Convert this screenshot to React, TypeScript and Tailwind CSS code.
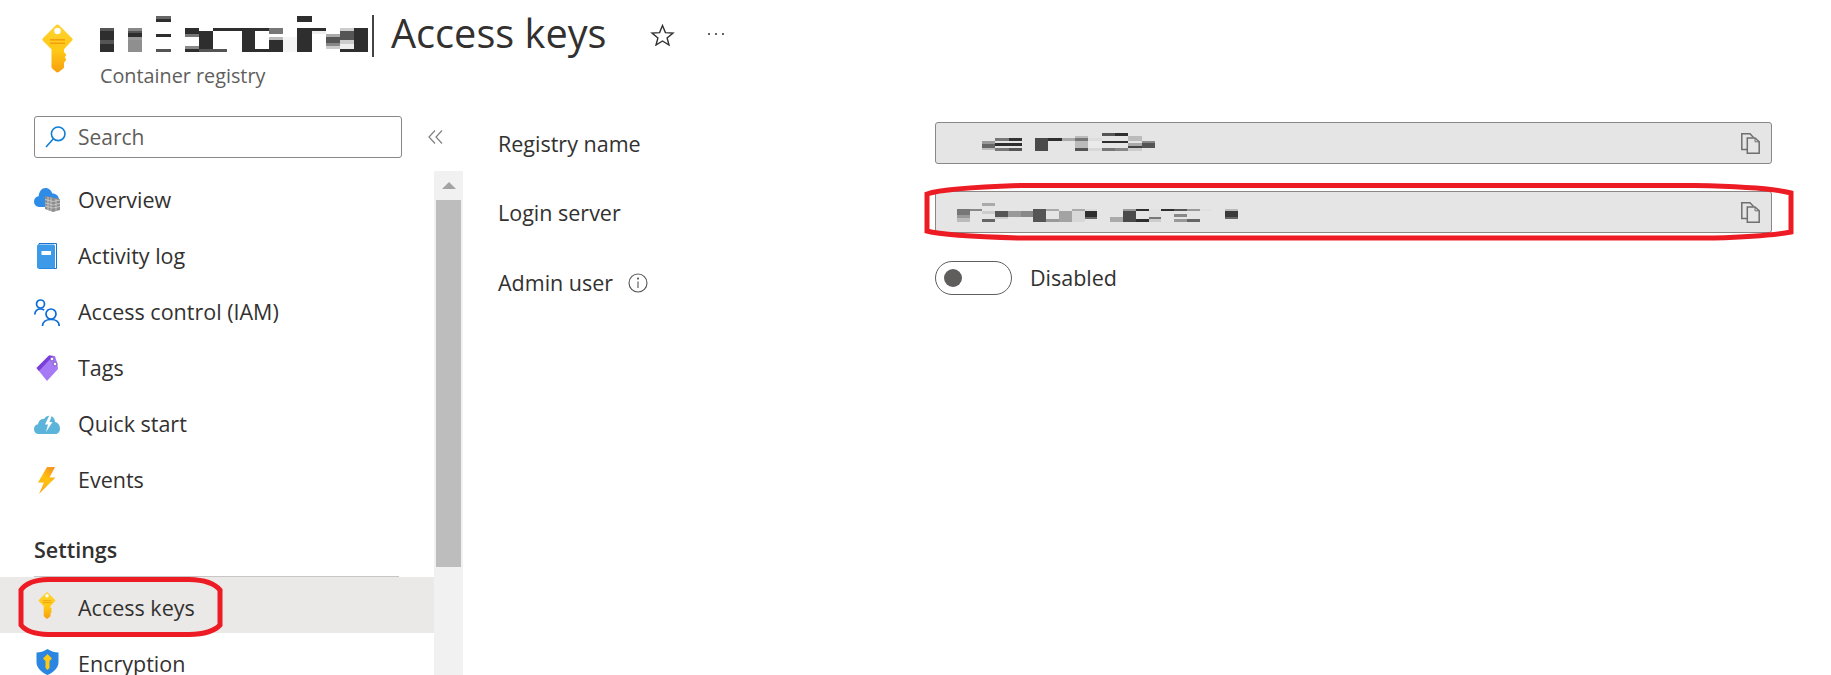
import { useId } from "react";

type Block = [number, number, number, number, string];

const titleBlocks: Block[] = [
  [216, 258, 54, 126, "#2e2e2e"], [216, 258, 54, 63, "#555"], [216, 258, 90, 100, "#555"],
  [300, 342, 54, 63, "#888"], [300, 342, 63, 70, "#555"], [300, 342, 70, 80, "#2e2e2e"], [300, 342, 80, 90, "#9a9a9a"], [300, 342, 90, 126, "#8f8f8f"],
  [384, 430, 18, 28, "#666"], [384, 430, 28, 36, "#2e2e2e"], [384, 430, 72, 81, "#2e2e2e"], [384, 430, 117, 126, "#555"],
  [470, 513, 54, 72, "#2e2e2e"], [470, 513, 72, 81, "#777"], [470, 513, 108, 117, "#888"], [470, 513, 117, 126, "#2e2e2e"],
  [513, 555, 63, 117, "#2e2e2e"], [513, 555, 117, 126, "#555"], [555, 597, 54, 63, "#2e2e2e"], [555, 597, 117, 126, "#555"],
  [597, 640, 54, 63, "#2e2e2e"], [640, 681, 54, 126, "#2e2e2e"], [681, 723, 54, 63, "#2e2e2e"], [681, 723, 117, 126, "#2e2e2e"],
  [723, 765, 54, 72, "#777"], [723, 765, 81, 90, "#bbb"], [723, 765, 90, 126, "#2e2e2e"], [765, 807, 81, 126, "#f5f5f5"],
  [807, 852, 18, 36, "#2e2e2e"], [807, 852, 54, 126, "#2e2e2e"], [852, 894, 54, 63, "#2e2e2e"], [852, 894, 63, 72, "#eee"],
  [894, 936, 72, 81, "#aaa"], [894, 936, 81, 99, "#555"], [894, 936, 99, 108, "#888"], [894, 936, 108, 117, "#ccc"],
  [936, 978, 54, 63, "#ccc"], [936, 978, 63, 90, "#555"], [936, 978, 90, 100, "#ccc"], [936, 978, 100, 117, "#eee"], [936, 978, 117, 126, "#2e2e2e"],
  [978, 1020, 54, 126, "#2e2e2e"], [1030, 1037, 15, 140, "#444"],
];

const nameBlocks: Block[] = [
  [66, 105, 45, 54, "#999"], [66, 105, 54, 66, "#666"], [66, 105, 66, 72, "#bbb"],
  [105, 147, 36, 45, "#777"], [105, 147, 51, 60, "#2e2e2e"], [105, 147, 66, 75, "#777"],
  [147, 186, 36, 45, "#333"], [147, 186, 51, 60, "#2e2e2e"], [147, 186, 66, 75, "#555"],
  [225, 264, 36, 75, "#4a4a4a"], [264, 306, 36, 45, "#2e2e2e"], [306, 345, 36, 45, "#aaa"],
  [345, 384, 30, 36, "#bbb"], [345, 384, 36, 45, "#777"], [345, 384, 45, 66, "#bbb"], [345, 384, 66, 75, "#555"],
  [384, 426, 36, 45, "#ddd"], [384, 426, 45, 66, "#eaeaea"], [384, 426, 66, 75, "#d8d8d8"],
  [426, 465, 21, 30, "#555"], [426, 465, 45, 51, "#2e2e2e"], [426, 465, 66, 75, "#777"],
  [465, 504, 21, 30, "#2e2e2e"], [465, 504, 45, 51, "#2e2e2e"], [465, 504, 66, 75, "#888"],
  [504, 546, 30, 45, "#bbb"], [504, 546, 51, 60, "#aaa"], [504, 546, 60, 66, "#444"], [504, 546, 66, 75, "#ccc"],
  [546, 585, 45, 51, "#888"], [546, 585, 51, 66, "#555"],
];

const serverBlocks: Block[] = [
  [-9, 30, 252, 270, "#777"], [-9, 30, 270, 280, "#999"], [-9, 30, 280, 291, "#bbb"], [30, 66, 252, 258, "#888"],
  [66, 105, 234, 243, "#aaa"], [66, 105, 258, 267, "#ccc"], [66, 105, 282, 291, "#666"],
  [105, 144, 258, 276, "#555"], [105, 144, 276, 282, "#ccc"], [144, 183, 258, 276, "#999"], [183, 219, 258, 276, "#888"],
  [219, 258, 252, 291, "#555"], [258, 297, 252, 258, "#aaa"], [258, 297, 282, 291, "#999"], [297, 336, 258, 291, "#a3a3a3"],
  [336, 375, 252, 258, "#aaa"], [336, 375, 258, 291, "#d8d8d8"], [375, 411, 252, 258, "#ddd"], [375, 411, 258, 276, "#2e2e2e"], [375, 411, 276, 282, "#666"],
  [450, 489, 276, 291, "#aaa"], [489, 528, 252, 258, "#999"], [489, 528, 258, 291, "#4a4a4a"],
  [528, 567, 252, 258, "#2e2e2e"], [528, 567, 282, 291, "#2e2e2e"], [567, 603, 252, 276, "#e0e0e0"], [567, 603, 276, 282, "#777"], [567, 603, 282, 291, "#ccc"],
  [603, 642, 252, 258, "#2e2e2e"], [642, 681, 252, 258, "#555"], [642, 681, 267, 276, "#888"], [642, 681, 282, 291, "#999"],
  [681, 720, 252, 258, "#999"], [681, 720, 282, 291, "#666"], [720, 756, 252, 258, "#e0e0e0"],
  [795, 834, 252, 258, "#bbb"], [795, 834, 258, 276, "#3a3a3a"], [795, 834, 276, 282, "#666"],
];

// redacted text in the screenshot, drawn from zoomed-in pixel blocks
function Mosaic({ blocks, box, width, height }: { blocks: Block[]; box: string; width: number; height: number }) {
  return (
    <svg width={width} height={height} viewBox={box} preserveAspectRatio="none" shapeRendering="crispEdges" className="shrink-0">
      {blocks.map(([x0, x1, y0, y1, fill], i) => (
        <rect key={i} x={x0} y={y0} width={x1 - x0} height={y1 - y0} fill={fill} />
      ))}
    </svg>
  );
}

function KeyIcon({ width, height }: { width: number; height: number }) {
  const id = useId();
  return (
    <svg width={width} height={height} viewBox="0 0 31 49">
      <defs>
        <linearGradient id={id} x1="0" y1="0" x2="0" y2="1">
          <stop offset="0" stopColor="#ffd22e" />
          <stop offset="0.55" stopColor="#ffc815" />
          <stop offset="1" stopColor="#f7a30f" />
        </linearGradient>
      </defs>
      <path
        d="M15.5 2.5 L28.5 15.5 L20 24.5 V29 L22 31 L20 33 L22 35.5 L20 38 V43 L15.5 46.5 L11.5 43 V24.5 L2.5 15.5 Z"
        fill={`url(#${id})`}
        stroke={`url(#${id})`}
        strokeWidth="4"
        strokeLinejoin="round"
      />
      <circle cx="15.5" cy="7" r="3.2" fill="#fff" />
      <rect x="8" y="15" width="15" height="1.6" fill="#f29f0d" />
      <rect x="8" y="18.5" width="15" height="1.6" fill="#f29f0d" />
    </svg>
  );
}

function CloudIcon() {
  return (
    <svg width="26" height="24" viewBox="0 0 26 24">
      <path d="M6 19 C2 19 0 16.5 0 13.5 C0 10.5 2 8.6 4.6 8.2 C5 3.5 8 0 11.5 0 C15 0 17.5 2.5 18.3 5.6 C22 5.6 25 8 25 12 C25 15 24 19 20 19 Z" fill="#2f8ce6" />
      <path d="M11 8 L26 11 V22 L19 24 L11 21 Z" fill="#8c8c8c" />
      <path d="M11 11.5 L19 13.5 L26 12 M11 15 L19 17 L26 15.5 M11 18 L19 20 L26 18.5 M14 9 V22 M17 9.5 V23.5 M22 11 V23" stroke="#d2d2d2" strokeWidth="0.8" fill="none" />
    </svg>
  );
}

function BookIcon() {
  return (
    <svg width="20" height="26" viewBox="0 0 20 26">
      <path d="M2 0.5 H19.5 V25.5 H2 Z" fill="none" stroke="#1b75d0" strokeWidth="1" />
      <rect x="0" y="1.5" width="18" height="24" rx="1.5" fill="#3c9ae8" />
      <rect x="4.5" y="8" width="9.5" height="4" fill="#fff" />
    </svg>
  );
}

function PeopleIcon() {
  return (
    <svg width="26" height="27" viewBox="0 0 26 27" fill="none" stroke="#0a6bdb" strokeWidth="1.7">
      <circle cx="6.5" cy="5" r="4" />
      <path d="M0.8 15.5 C1 12 3.5 10 6.5 10 C8 10 9.2 10.4 10.2 11.2" />
      <circle cx="17" cy="15" r="5" />
      <path d="M8.5 27 C8.5 23 12 20.5 17 20.5 C22 20.5 25.2 23 25.2 27" />
    </svg>
  );
}

function TagIcon() {
  return (
    <svg width="22" height="26" viewBox="0 0 22 26">
      <path d="M0.5 13 L13 0.5 L19 1 L21.5 9 L22 14 L11 26 Z" fill="#a67af4" />
      <path d="M0.5 13 L13 0.5 L17 1 L3 16 Z" fill="#7a3fd8" />
      <circle cx="16" cy="4" r="1.9" fill="#fff" stroke="#5b2bb0" strokeWidth="0.7" />
      <circle cx="19" cy="9" r="1.9" fill="#fff" stroke="#5b2bb0" strokeWidth="0.7" />
    </svg>
  );
}

function QuickStartIcon() {
  return (
    <svg width="26" height="19" viewBox="0 0 26 19">
      <path d="M5 19 C2 19 0 17 0 14 C0 11.5 1.6 9.6 4 9.2 C4.5 5.5 7 3.5 10 4 C11.5 1.5 14 0 17 1 C20 2 21 5 21 7 C24 7.5 26 10.5 26 13.5 C26 17 24 19 21 19 Z" fill="#5db4da" />
      <path d="M15.5 0 L11 9.5 H14 L12 17 L18.5 7 H15.5 L18 0 Z" fill="#fff" />
    </svg>
  );
}

function BoltIcon() {
  const id = useId();
  return (
    <svg width="18" height="27" viewBox="0 0 18 27">
      <defs>
        <linearGradient id={id} x1="0.8" y1="0" x2="0.3" y2="1">
          <stop offset="0" stopColor="#f7931e" />
          <stop offset="0.5" stopColor="#ffc20e" />
          <stop offset="1" stopColor="#f7a81e" />
        </linearGradient>
      </defs>
      <path d="M9 0 H17 L11.5 10.5 H17.5 L1 27 L6 15.5 H0 Z" fill={`url(#${id})`} />
    </svg>
  );
}

function ShieldIcon() {
  return (
    <svg width="23" height="26" viewBox="0 0 23 26" className="mt-[1px]">
      <path d="M11.5 0 C15 2.5 19 3.5 22.5 3.5 V13 C22.5 19 17.5 23.5 11.5 26 C5.5 23.5 0.5 19 0.5 13 V3.5 C4 3.5 8 2.5 11.5 0 Z" fill="#2a86e0" />
      <path d="M11.5 5 L16 9.5 L13.5 12 V19 L11.5 21 L9.5 19 V12 L7 9.5 Z" fill="#ffc815" />
    </svg>
  );
}

function CopyIcon() {
  return (
    <svg width="19" height="21" viewBox="0 0 19 21" fill="none" stroke="#6f6f6f" strokeWidth="1.5" className="mt-[1px]">
      <path d="M6 16.5 H0.8 V0.8 H9 L12.5 4.5" />
      <path d="M6.3 5 H14 L18.2 8.8 V20.2 H6.3 Z" fill="#e5e5e5" />
      <path d="M14 5 V8.8 H18.2" strokeWidth="1" />
    </svg>
  );
}

const navItems = [
  { label: "Overview", icon: <CloudIcon /> },
  { label: "Activity log", icon: <BookIcon /> },
  { label: "Access control (IAM)", icon: <PeopleIcon /> },
  { label: "Tags", icon: <TagIcon /> },
  { label: "Quick start", icon: <QuickStartIcon /> },
  { label: "Events", icon: <BoltIcon /> },
];

function NavRow({ label, icon, active, low }: { label: string; icon: React.ReactNode; active?: boolean; low?: boolean }) {
  return (
    <div className={`flex h-[56px] shrink-0 items-center gap-[18px] pl-[34px] text-[21.5px] text-[#323130] ${active ? "bg-[#ebe9e8]" : ""}`}>
      <span className="flex h-[28px] w-[26px] items-center justify-center">{icon}</span>
      <span className={low ? "pt-[6px]" : ""}>{label}</span>
    </div>
  );
}

function ReadonlyField({ children }: { children: React.ReactNode }) {
  return (
    <div className="flex h-[42px] w-[837px] items-center justify-between rounded-[3px] border border-[#8a8886] bg-[#e5e5e5] pr-[11px]">
      {children}
      <CopyIcon />
    </div>
  );
}

export default function App() {
  return (
    <div className="relative h-[675px] w-[1831px] overflow-hidden bg-white font-['Open_Sans',sans-serif] text-[#323130]">
      {/* Blade header */}
      <header className="flex h-[116px] pl-[42px] pt-[24px]">
        <KeyIcon width={31} height={49} />
        <div className="ml-[27px]">
          <div className="flex h-[42px] items-start">
            <div className="mt-[-9px]">
              <Mosaic blocks={titleBlocks} box="216 15 824 125" width={275} height={42} />
            </div>
            <h1 className="ml-[16px] mt-[-18px] text-[39.7px] leading-[54px] text-[#323130]">Access keys</h1>
            <svg width="25" height="22" viewBox="0 0 25 22" fill="none" stroke="#323130" strokeWidth="1.4" className="ml-[44px] mt-0">
              <path d="M12.5 1.5 L15.4 8.6 L23 9.1 L17.1 13.9 L19 21 L12.5 17 L6 21 L7.9 13.9 L2 9.1 L9.6 8.6 Z" />
            </svg>
            <div className="ml-[33px] mt-[9px] flex gap-[5px]">
              <span className="h-[2px] w-[2px] rounded-full bg-[#323130]" />
              <span className="h-[2px] w-[2px] rounded-full bg-[#323130]" />
              <span className="h-[2px] w-[2px] rounded-full bg-[#323130]" />
            </div>
          </div>
          <p className="mt-[-2px] text-[19.8px] leading-[24px] text-[#605e5c]">Container registry</p>
        </div>
      </header>

      <div className="flex">
        {/* Left menu */}
        <aside className="w-[463px] shrink-0">
          <div className="mb-[13px] flex items-center pl-[34px]">
            <div className="flex h-[42px] w-[368px] items-center gap-[12px] rounded-[3px] border border-[#8a8886] pl-[10px]">
              <svg width="21" height="22" viewBox="0 0 21 22" fill="none" stroke="#0f7fd6" strokeWidth="1.6">
                <circle cx="13.2" cy="7.8" r="6.8" />
                <path d="M8.4 12.8 L1 21" />
              </svg>
              <span className="pt-[2px] text-[21px] text-[#605e5c]">Search</span>
            </div>
            <svg width="15" height="14" viewBox="0 0 15 14" fill="none" stroke="#7f7f7f" strokeWidth="1.2" className="ml-[26px]">
              <path d="M7 0.5 L1 7 L7 13.5 M14 0.5 L8 7 L14 13.5" />
            </svg>
          </div>

          <div className="flex h-[504px]">
            <nav className="w-[434px] overflow-hidden pt-[1px]">
              {navItems.map((item) => (
                <NavRow key={item.label} label={item.label} icon={item.icon} />
              ))}
              <div className="mx-[34px] box-content h-[68px] w-[365px] border-b border-[#c8c6c4]">
                <h2 className="pt-[25px] text-[21.5px] font-semibold leading-[34px] text-[#323130]">Settings</h2>
              </div>
              <NavRow label="Access keys" icon={<KeyIcon width={18} height={27} />} active low />
              <NavRow label="Encryption" icon={<ShieldIcon />} low />
            </nav>

            <div className="flex w-[29px] flex-col items-center bg-[#f1f1f1]">
              <div className="flex h-[29px] items-center justify-center">
                <span className="h-0 w-0 border-x-[7px] border-b-[7px] border-x-transparent border-b-[#a3a3a3]" />
              </div>
              <div className="h-[367px] w-[25px] bg-[#bdbdbd]" />
            </div>
          </div>
        </aside>

        {/* Properties form */}
        <main className="pl-[35px] pt-[6px] text-[21.5px]">
          <div className="mb-[27px] flex">
            <label className="w-[437px] pt-[7px] leading-[30px]">Registry name</label>
            <ReadonlyField>
              <span className="ml-[46px] mt-[-3px]">
                <Mosaic blocks={nameBlocks} box="66 21 519 54" width={173} height={18} />
              </span>
            </ReadonlyField>
          </div>
          <div className="mb-[28px] flex">
            <label className="w-[437px] pt-[7px] leading-[30px]">Login server</label>
            <ReadonlyField>
              <span className="ml-[21px] mt-[1px]">
                <Mosaic blocks={serverBlocks} box="-9 234 843 57" width={281} height={19} />
              </span>
            </ReadonlyField>
          </div>
          <div className="flex items-start">
            <div className="flex w-[437px] items-center gap-[15px] pt-[7px] leading-[30px]">
              <label>Admin user</label>
              <svg width="20" height="20" viewBox="0 0 20 20" fill="none" stroke="#555" strokeWidth="1.1">
                <circle cx="10" cy="10" r="9" />
                <path d="M10 8.5 V15" />
                <circle cx="10" cy="5.6" r="0.5" fill="#555" />
              </svg>
            </div>
            <div className="flex items-center gap-[18px]">
              <div className="flex h-[34px] w-[77px] items-center rounded-full border border-[#605e5c] pl-[8px]">
                <span className="h-[18px] w-[18px] rounded-full bg-[#605e5c]" />
              </div>
              <span className="leading-[30px]">Disabled</span>
            </div>
          </div>
        </main>
      </div>

      {/* Red callouts drawn on top of the screenshot */}
      <svg width="1831" height="675" className="pointer-events-none absolute inset-0" fill="none" stroke="#ed1c24" strokeWidth="5">
        <path d="M1020 185.5 L1695 185.5 Q1770 187 1791 193 L1791 232 Q1770 236 1714 238 L1020 238 Q945 236 927 231 L927 194 Q945 188 1020 185.5 Z" />
        <path d="M48 579.5 L189 579.5 Q212 580 220 590 L220 625 Q212 634 189 634.5 L48 634.5 Q28 634 21 625 L21 590 Q28 580 48 579.5 Z" />
      </svg>
    </div>
  );
}
